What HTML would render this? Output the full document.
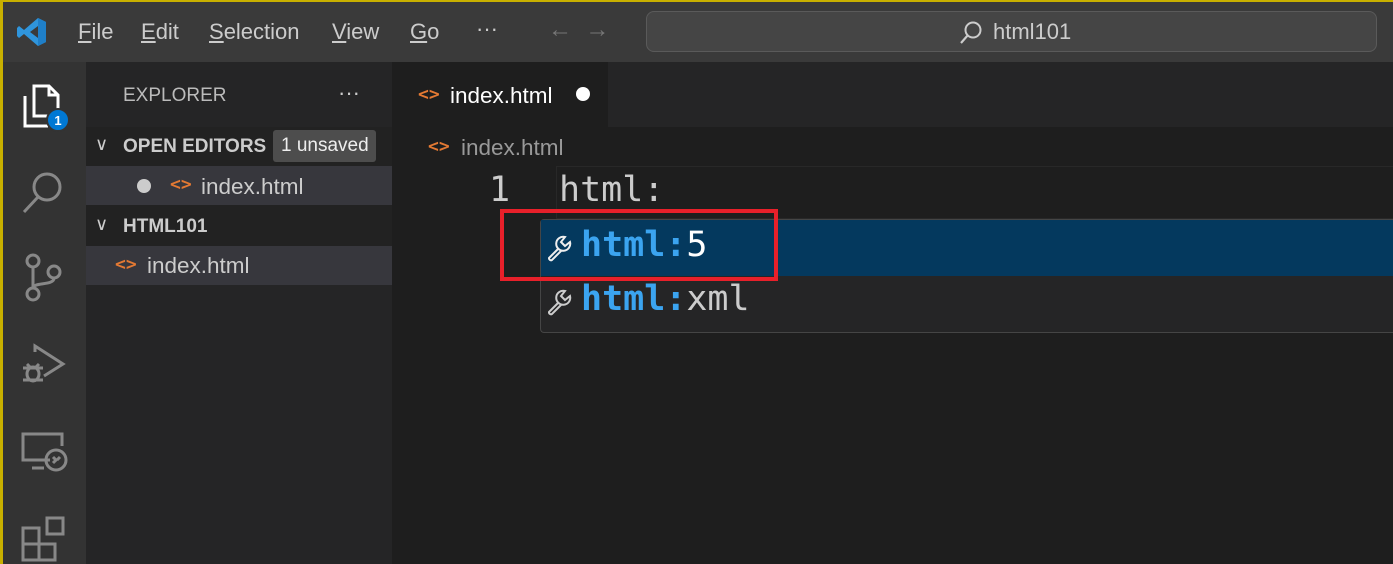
<!DOCTYPE html>
<html><head><style>
*{margin:0;padding:0;box-sizing:border-box}
body{width:1393px;height:564px;overflow:hidden;background:#1e1e1e;font-family:"Liberation Sans",sans-serif;position:relative}
.a{position:absolute}
.mono{font-family:"DejaVu Sans Mono","Liberation Mono",monospace}
.m{position:absolute;top:19px;font-size:22px;color:#ccc}
</style></head><body>
<div class="a" style="left:0;top:0;width:1393px;height:62px;background:#3a3a3a;border-top:2px solid #c8b000"></div>
<div class="a" style="left:0;top:0;width:3px;height:564px;background:#c8b000"></div>
<svg class="a" style="left:16px;top:17px" width="32" height="30" viewBox="0 0 32 30"><path d="M22 1 L30 5 L30 25 L22 29 L8 17 L3 21 L1 19 L1 11 L3 9 L8 13 Z M22 9 L14 15 L22 21 Z" fill="#2f95dc"/><path d="M22 1 L30 5 L30 25 L22 29Z" fill="#1f7fc8"/></svg>
<div class="m" style="left:78px"><u>F</u>ile</div>
<div class="m" style="left:141px"><u>E</u>dit</div>
<div class="m" style="left:209px"><u>S</u>election</div>
<div class="m" style="left:332px"><u>V</u>iew</div>
<div class="m" style="left:410px"><u>G</u>o</div>
<div class="a" style="left:476px;top:16px;font-size:22px;color:#ccc">···</div>
<div class="a" style="left:548px;top:16px;font-size:24px;color:#777">←&nbsp; →</div>
<div class="a" style="left:646px;top:11px;width:731px;height:41px;border:1px solid #5a5a5a;border-radius:8px;background:#454545"></div>
<svg class="a" style="left:958px;top:20px" width="26" height="26" viewBox="0 0 26 26"><circle cx="15" cy="10" r="7.5" fill="none" stroke="#ccc" stroke-width="2"/><path d="M10 15 L3 23" stroke="#ccc" stroke-width="2.2"/></svg>
<div class="a" style="left:993px;top:19px;font-size:22px;color:#ccc">html101</div>

<div class="a" style="left:3px;top:62px;width:83px;height:502px;background:#333"></div>
<svg class="a" style="left:20px;top:82px" width="52" height="52" viewBox="0 0 52 52"><path d="M14 4 H29 L38 13 V34 H14 Z M29 4 V13 H38" fill="none" stroke="#fff" stroke-width="3"/><path d="M5 14 V44 H28" fill="none" stroke="#fff" stroke-width="3"/><circle cx="38" cy="38" r="11" fill="#0078d4" stroke="#333" stroke-width="2"/><text x="38" y="43" font-size="13" fill="#fff" text-anchor="middle" font-family="Liberation Sans" font-weight="bold">1</text></svg>
<svg class="a" style="left:20px;top:168px" width="48" height="48" viewBox="0 0 48 48" fill="none" stroke="#888" stroke-width="3"><circle cx="27" cy="19" r="13"/><path d="M18 29 L4 44"/></svg>
<svg class="a" style="left:20px;top:252px" width="48" height="50" viewBox="0 0 48 50" fill="none" stroke="#888" stroke-width="3"><circle cx="13" cy="9" r="6"/><circle cx="34" cy="20" r="6"/><circle cx="13" cy="42" r="6"/><path d="M13 15 V36 M34 26 C34 34 13 30 13 36"/></svg>
<svg class="a" style="left:20px;top:342px" width="48" height="48" viewBox="0 0 48 48" fill="none" stroke="#888" stroke-width="3"><path d="M15 10 V4 L43 22 L24 34"/><ellipse cx="13" cy="32" rx="6" ry="7"/><path d="M3 26 H23 M3 38 H23 M7 22 L10 25 M19 22 L16 25"/></svg>
<svg class="a" style="left:20px;top:432px" width="48" height="48" viewBox="0 0 48 48" fill="none" stroke="#888" stroke-width="3"><path d="M30 28 H3 V2 H42 V14 M12 36 H24"/><circle cx="36" cy="28" r="10"/><path d="M33 25 L36 28 L33 31 M40 25 L37 28"/></svg>
<svg class="a" style="left:20px;top:515px" width="48" height="49" viewBox="0 0 48 49" fill="none" stroke="#888" stroke-width="3"><rect x="3" y="13" width="16" height="16"/><rect x="3" y="29" width="16" height="16"/><rect x="19" y="29" width="16" height="16"/><rect x="27" y="3" width="16" height="16"/></svg>

<div class="a" style="left:86px;top:62px;width:306px;height:502px;background:#252526"></div>
<div class="a" style="left:123px;top:85px;font-size:19px;color:#bbb">EXPLORER</div>
<div class="a" style="left:338px;top:80px;font-size:22px;color:#ccc">···</div>
<div class="a" style="left:86px;top:127px;width:306px;height:39px;background:#222"></div>
<div class="a" style="left:95px;top:134px;font-size:18px;color:#ccc">∨</div>
<div class="a" style="left:123px;top:136px;font-size:19px;font-weight:bold;color:#ccc">OPEN EDITORS</div>
<div class="a" style="left:273px;top:130px;width:103px;height:32px;background:#4d4d4d;border-radius:3px;color:#eee;font-size:19px;padding:5px 0 0 8px">1 unsaved</div>
<div class="a" style="left:86px;top:166px;width:306px;height:39px;background:#37373d"></div>
<div class="a" style="left:137px;top:179px;width:14px;height:14px;border-radius:50%;background:#ccc"></div>
<div class="a mono" style="left:170px;top:174px;font-size:18px;color:#e37933;font-weight:bold">&lt;&gt;</div>
<div class="a" style="left:201px;top:174px;font-size:22.5px;color:#ccc">index.html</div>
<div class="a" style="left:86px;top:205px;width:306px;height:41px;background:#222"></div>
<div class="a" style="left:95px;top:214px;font-size:18px;color:#ccc">∨</div>
<div class="a" style="left:123px;top:216px;font-size:19px;font-weight:bold;color:#ccc">HTML101</div>
<div class="a" style="left:86px;top:246px;width:306px;height:39px;background:#37373d"></div>
<div class="a mono" style="left:115px;top:254px;font-size:18px;color:#e37933;font-weight:bold">&lt;&gt;</div>
<div class="a" style="left:147px;top:253px;font-size:22.5px;color:#ccc">index.html</div>

<div class="a" style="left:392px;top:62px;width:1001px;height:65px;background:#252526"></div>
<div class="a" style="left:392px;top:62px;width:216px;height:65px;background:#1e1e1e"></div>
<div class="a mono" style="left:418px;top:84px;font-size:18px;color:#e37933;font-weight:bold">&lt;&gt;</div>
<div class="a" style="left:450px;top:83px;font-size:22.5px;color:#fff">index.html</div>
<div class="a" style="left:576px;top:87px;width:14px;height:14px;border-radius:50%;background:#fff"></div>
<div class="a mono" style="left:428px;top:136px;font-size:18px;color:#e37933;font-weight:bold">&lt;&gt;</div>
<div class="a" style="left:461px;top:135px;font-size:22.5px;color:#999">index.html</div>

<div class="a" style="left:556px;top:166px;width:837px;height:53px;border:1px solid #282828;border-right:none"></div>
<div class="a mono" style="left:489px;top:170px;font-size:35px;color:#ccc">1</div>
<div class="a mono" style="left:559px;top:170px;font-size:35px;color:#ccc">html:</div>

<div class="a" style="left:540px;top:219px;width:853px;height:114px;background:#252526;border:1px solid #454545;border-right:none;border-radius:4px 0 0 4px"></div>
<div class="a" style="left:541px;top:220px;width:852px;height:56px;background:#04395e"></div>
<svg class="a" style="left:545px;top:234px" width="28" height="28" viewBox="0 0 28 28" fill="none" stroke="#eee" stroke-width="2"><path d="M20 3 A7 7 0 1 0 25 8 L20 12 L16 8 Z M14 14 L4 24 A2 2 0 0 0 7 26 L17 16"/></svg>
<div class="a mono" style="left:581px;top:225px;font-size:35px;color:#fff"><b style="color:#3ba4f0">html:</b>5</div>
<svg class="a" style="left:545px;top:288px" width="28" height="28" viewBox="0 0 28 28" fill="none" stroke="#ccc" stroke-width="2"><path d="M20 3 A7 7 0 1 0 25 8 L20 12 L16 8 Z M14 14 L4 24 A2 2 0 0 0 7 26 L17 16"/></svg>
<div class="a mono" style="left:581px;top:279px;font-size:35px;color:#ccc"><b style="color:#3ba4f0">html:</b>xml</div>
<div class="a" style="left:500px;top:209px;width:278px;height:72px;border:4px solid #e8202a"></div>
</body></html>
